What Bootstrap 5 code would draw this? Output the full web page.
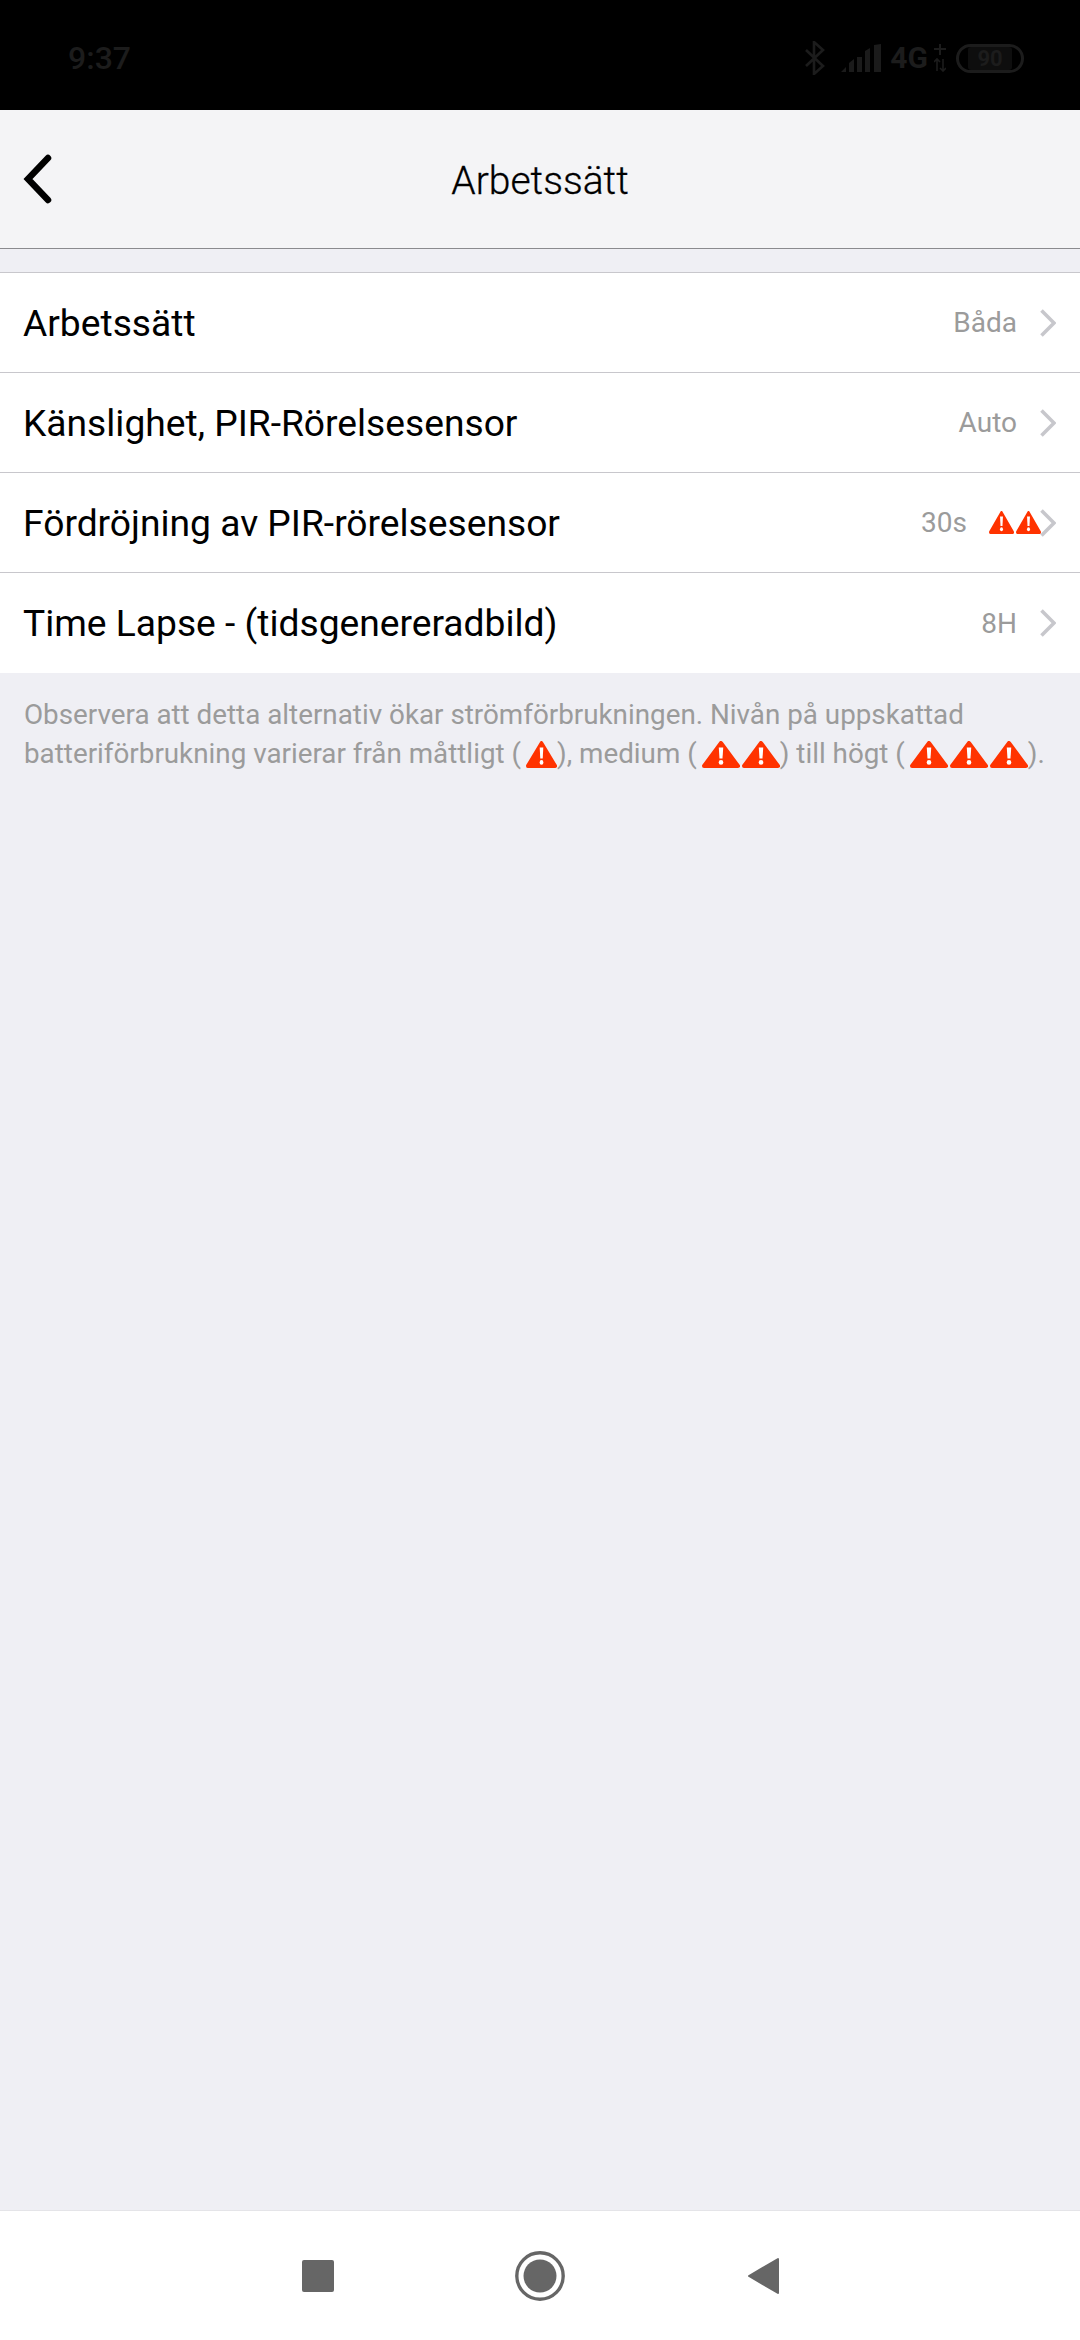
<!DOCTYPE html>
<html>
<head>
  <title>Arbetssätt</title>
  <link rel="stylesheet" href="https://cdn.jsdelivr.net/npm/bootstrap@5.3.0/dist/css/bootstrap.min.css">
  <style>
    body { font-family: Roboto, "Liberation Sans", sans-serif; background: #efeff4; color: #000; }
    .status-strip { height: 110px; background: #000; color: #1c1c1c; padding: 6px 56px 0 68px; }
    .status-time { font-size: 32px; font-weight: 500; line-height: 1; }
    .status-net { font-size: 30px; font-weight: 700; line-height: 1; margin: 0 6px 0 9px; }
    .status-battery { width: 68px; height: 29px; border: 3px solid #1c1c1c; border-radius: 15px; font-size: 22px; font-weight: 700; line-height: 1; margin-left: 10px; }
    .status-battery span { background: #0e0e0e; padding: 1px 9px 0; border-radius: 3px; }
    .top-bar { height: 139px; background: #f4f4f6; border-bottom: 1px solid #8a8a8e; padding: 0 0 0 22px; }
    .top-side { width: 60px; }
    .top-title { font-size: 39px; line-height: 1; margin-top: 4px; margin-left: 2px; font-weight: 300; -webkit-text-stroke: .3px #000; }
    .setting-list { margin-top: 23px; border-top: 1px solid #c8c7cc; border-radius: 0; }
    .setting-row { height: 100px; padding: 2px 24px 0 23px; font-size: 37.2px; background: #fff; border-color: #c8c7cc; color: #000; }
    .setting-row svg { margin-top: -2px; }
    .setting-value { font-size: 28px; color: #9b9b9b; margin-right: 23px; margin-top: -1px; }
    .setting-warn { margin-right: 22px; }
    .warn-pair { gap: 2px; margin-right: -1px; }
    .help-note { padding: 22px 24px 0; font-size: 27.8px; line-height: 39px; color: #9b9b9b; }
    .note-icon { width: 38px; height: 27px; vertical-align: -5px; margin-right: 2px; }
    .note-icon.first-icon { margin-left: 5px; }
    .note-icon.last-icon { margin-right: 0; }
    .note-icon.narrow-icon { width: 31px; }
    .page-fill { flex: 1 1 auto; }
    .nav-strip { height: 130px; background: #fff; border-top: 1px solid #e4e4e8; }
    .nav-inner { width: 477px; }
  </style>
</head>
<body class="vh-100 d-flex flex-column overflow-hidden">
  <svg width="0" height="0" class="position-absolute">
    <symbol id="warn" viewBox="0 0 38 27" preserveAspectRatio="none">
      <path d="M19 2 L36 25 H2 Z" fill="#ff3300" stroke="#ff3300" stroke-width="4" stroke-linejoin="round"/>
      <path d="M16.8 6.5 h4.4 l-.7 11 h-3 Z" fill="#fff"/>
      <circle cx="19" cy="21.4" r="2.3" fill="#fff"/>
    </symbol>
  </svg>

  <div class="status-strip d-flex align-items-center justify-content-between flex-shrink-0">
    <div class="status-time">9:37</div>
    <div class="d-flex align-items-center">
      <svg width="20" height="34" viewBox="0 0 20 34" fill="none" stroke="#1c1c1c" stroke-width="2.6"><path d="M1 9 L18 25 L9 33 V1 L18 9 L1 25"/></svg>
      <svg width="40" height="28" viewBox="0 0 40 28" fill="#1c1c1c" class="ms-3"><path d="M0 28 L5 23 V28 Z M8 19 L13 15 V28 H8 Z M16 13 H21 V28 H16 Z M24 7 L29 4 V28 H24 Z M33 1 L40 0 V28 H33 Z" opacity=".95"/></svg>
      <div class="status-net">4G</div>
      <svg width="12" height="28" viewBox="0 0 12 28" fill="none" stroke="#1c1c1c" stroke-width="2"><path d="M6 0 V11 M0 5 H12"/><path d="M3 15 V27 M0 18 L3 15 L6 18 M9 15 V27 M6 24 L9 27 L12 24" stroke-width="1.6"/></svg>
      <div class="status-battery d-flex align-items-center justify-content-center"><span>90</span></div>
    </div>
  </div>

  <div class="top-bar d-flex align-items-center flex-shrink-0">
    <div class="top-side">
      <svg width="30" height="50" viewBox="0 0 30 50" fill="none" stroke="#000" stroke-width="6.5" stroke-linecap="round" stroke-linejoin="miter" class="d-block"><path d="M26 4 L6 25 L26 46"/></svg>
    </div>
    <div class="top-title flex-grow-1 text-center">Arbetssätt</div>
    <div class="top-side me-4"></div>
  </div>

  <div class="list-group list-group-flush setting-list flex-shrink-0">
    <div class="list-group-item setting-row d-flex align-items-center">
      <span class="me-auto">Arbetssätt</span>
      <span class="setting-value">Båda</span>
      <svg width="16" height="28" viewBox="0 0 16 28" fill="none" stroke="#c7c7cc" stroke-width="3.6"><path d="M1.5 1.5 L14 14 L1.5 26.5"/></svg>
    </div>
    <div class="list-group-item setting-row d-flex align-items-center">
      <span class="me-auto">Känslighet, PIR-Rörelsesensor</span>
      <span class="setting-value">Auto</span>
      <svg width="16" height="28" viewBox="0 0 16 28" fill="none" stroke="#c7c7cc" stroke-width="3.6"><path d="M1.5 1.5 L14 14 L1.5 26.5"/></svg>
    </div>
    <div class="list-group-item setting-row d-flex align-items-center">
      <span class="me-auto">Fördröjning av PIR-rörelsesensor</span>
      <span class="setting-value setting-warn">30s</span>
      <span class="d-flex warn-pair">
        <svg width="25" height="23"><use href="#warn"/></svg>
        <svg width="25" height="23"><use href="#warn"/></svg>
      </span>
      <svg width="16" height="28" viewBox="0 0 16 28" fill="none" stroke="#c7c7cc" stroke-width="3.6"><path d="M1.5 1.5 L14 14 L1.5 26.5"/></svg>
    </div>
    <div class="list-group-item setting-row d-flex align-items-center">
      <span class="me-auto">Time Lapse - (tidsgenereradbild)</span>
      <span class="setting-value">8H</span>
      <svg width="16" height="28" viewBox="0 0 16 28" fill="none" stroke="#c7c7cc" stroke-width="3.6"><path d="M1.5 1.5 L14 14 L1.5 26.5"/></svg>
    </div>
  </div>

  <div class="help-note page-fill">
    Observera att detta alternativ ökar strömförbrukningen. Nivån på uppskattad<br>batteriförbrukning varierar från måttligt (<svg class="note-icon first-icon narrow-icon last-icon"><use href="#warn"/></svg>), medium (<svg class="note-icon first-icon"><use href="#warn"/></svg><svg class="note-icon last-icon"><use href="#warn"/></svg>) till högt (<svg class="note-icon first-icon"><use href="#warn"/></svg><svg class="note-icon"><use href="#warn"/></svg><svg class="note-icon last-icon"><use href="#warn"/></svg>).
  </div>

  <div class="nav-strip d-flex justify-content-center align-items-center flex-shrink-0">
    <div class="nav-inner d-flex justify-content-between align-items-center">
      <svg width="32" height="32" viewBox="0 0 32 32"><rect width="32" height="32" rx="2" fill="#666"/></svg>
      <svg width="50" height="50" viewBox="0 0 50 50"><circle cx="25" cy="25" r="23.2" fill="none" stroke="#666" stroke-width="3.4"/><circle cx="25" cy="25" r="16.5" fill="#666"/></svg>
      <svg width="32" height="38" viewBox="0 0 32 38"><path d="M2 19 L31 2 V36 Z" fill="#666" stroke="#666" stroke-width="2" stroke-linejoin="round"/></svg>
    </div>
  </div>
  <script src="https://cdn.jsdelivr.net/npm/bootstrap@5.3.0/dist/js/bootstrap.bundle.min.js"></script>
</body>
</html>
